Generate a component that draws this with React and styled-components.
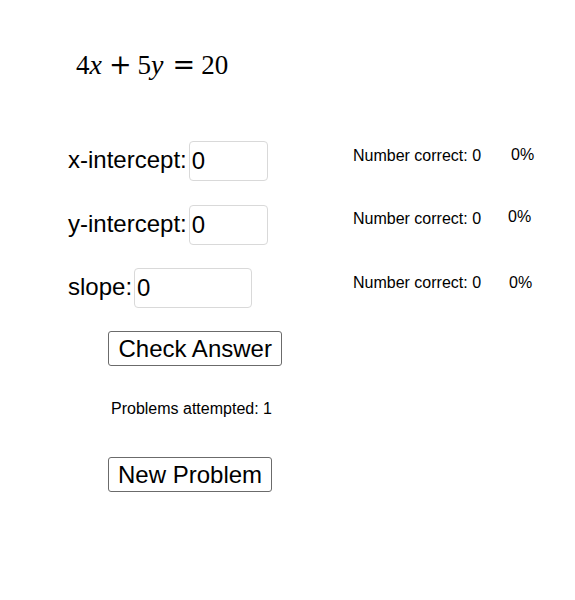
import React from "react";
import styled, { createGlobalStyle } from "styled-components";

const Global = createGlobalStyle`
  html, body { margin: 0; padding: 0; background: #ffffff; }
  body { font-family: "Liberation Sans", Arial, sans-serif; color: #000; }
`;

const Stage = styled.div`
  width: 575px;
  height: 600px;
  box-sizing: border-box;
  padding: 51px 0 0 68px;
  display: flex;
  flex-direction: column;
  align-items: flex-start;
`;

const Equation = styled.div`
  display: flex;
  align-items: baseline;
  margin-left: 8px;
  height: 27px;
  font-family: "Liberation Serif", "Times New Roman", serif;
  font-size: 27px;
  line-height: 27px;
`;

const Num = styled.span`
  margin-left: ${(p) => p.$ml || 0}px;
`;

const Var = styled.span`
  font-style: italic;
  font-size: 28px;
  margin-left: ${(p) => p.$ml || 0}px;
`;

const Op = styled.span`
  font-family: "DejaVu Serif", serif;
  font-size: 27px;
  margin-left: ${(p) => p.$ml || 0}px;
`;

const Rows = styled.div`
  margin-top: 63px;
  display: grid;
  grid-template-columns: 285px 190px;
  grid-auto-rows: 40px;
  row-gap: 23.5px;
`;

const Field = styled.div`
  display: flex;
  align-items: center;
  gap: 2px;
`;

const Label = styled.span`
  font-size: 24px;
  padding-bottom: 2px;
`;

const Input = styled.input`
  box-sizing: border-box;
  width: ${(p) => p.$w}px;
  height: 40px;
  margin: 0;
  padding: 0 2px;
  border: 1px solid #d9d9d9;
  border-radius: 4px;
  font-family: "Liberation Sans", Arial, sans-serif;
  font-size: 24px;
  color: #000;
  background: #fff;
  outline: none;
`;

const Stat = styled.div`
  display: grid;
  grid-template-columns: 155px auto;
  align-items: start;
  padding-top: 5.5px;
  font-size: 16px;
  line-height: 18px;
`;

const Percent = styled.span`
  position: relative;
  left: ${(p) => p.$dx}px;
  top: ${(p) => p.$dy}px;
`;

const Button = styled.button`
  box-sizing: border-box;
  height: 35px;
  margin: ${(p) => p.$mt}px 0 0 40px;
  padding: 0 ${(p) => p.$px}px;
  border: 1px solid #6b6b6b;
  border-radius: 3px;
  background: #fff;
  font-family: "Liberation Sans", Arial, sans-serif;
  font-size: 24px;
  color: #000;
  line-height: 1;
`;

const Attempted = styled.div`
  margin: 34px 0 0 43px;
  font-size: 16px;
  line-height: 18px;
`;

const rows = [
  { label: "x-intercept:", w: 79, dx: 3, dy: -1 },
  { label: "y-intercept:", w: 79, dx: 0, dy: -2 },
  { label: "slope:", w: 118, dx: 1, dy: 0 },
];

export default function App() {
  return (
    <>
      <Global />
      <Stage>
        <Equation>
          <Num>4</Num>
          <Var>x</Var>
          <Op $ml={7}>+</Op>
          <Num $ml={6}>5</Num>
          <Var>y</Var>
          <Op $ml={9}>=</Op>
          <Num $ml={6}>20</Num>
        </Equation>
        <Rows>
          {rows.map((r) => (
            <React.Fragment key={r.label}>
              <Field>
                <Label>{r.label}</Label>
                <Input $w={r.w} defaultValue="0" />
              </Field>
              <Stat>
                <span>Number correct: 0</span>
                <Percent $dx={r.dx} $dy={r.dy}>0%</Percent>
              </Stat>
            </React.Fragment>
          ))}
        </Rows>
        <Button $mt={23} $px={9.5}>Check Answer</Button>
        <Attempted>Problems attempted: 1</Attempted>
        <Button $mt={39} $px={9}>New Problem</Button>
      </Stage>
    </>
  );
}
